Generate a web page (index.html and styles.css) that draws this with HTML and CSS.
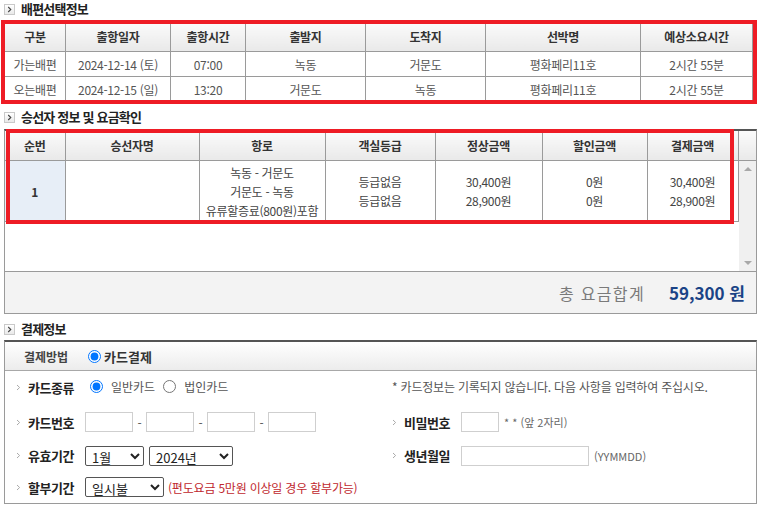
FILE: index.html
```html
<!DOCTYPE html>
<html lang="ko">
<head>
<meta charset="utf-8">
<title>배편선택정보</title>
<link rel="stylesheet" href="styles.css">
</head>
<body>
<div class="page">
  <h2 class="sec-title">
    <span class="sec-ico"><svg viewBox="0 0 11 11" width="11" height="11"><path d="M4.2 3 L6.8 5.5 L4.2 8" fill="none" stroke="#444" stroke-width="1.1"/></svg></span>
    배편선택정보
  </h2>
  <div class="sched-wrap">
    <table class="grid sched">
      <colgroup>
        <col style="width:61px"><col style="width:105px"><col style="width:75px"><col style="width:120px"><col style="width:120px"><col style="width:155px"><col style="width:112px">
      </colgroup>
      <thead>
        <tr><th>구분</th><th>출항일자</th><th>출항시간</th><th>출발지</th><th>도착지</th><th>선박명</th><th>예상소요시간</th></tr>
      </thead>
      <tbody>
        <tr><td>가는배편</td><td>2024-12-14 (토)</td><td>07:00</td><td>녹동</td><td>거문도</td><td>평화페리11호</td><td>2시간 55분</td></tr>
        <tr><td>오는배편</td><td>2024-12-15 (일)</td><td>13:20</td><td>거문도</td><td>녹동</td><td>평화페리11호</td><td>2시간 55분</td></tr>
      </tbody>
    </table>
    <div class="hl hl-sched"></div>
  </div>

  <h2 class="sec-title gap">
    <span class="sec-ico"><svg viewBox="0 0 11 11" width="11" height="11"><path d="M4.2 3 L6.8 5.5 L4.2 8" fill="none" stroke="#444" stroke-width="1.1"/></svg></span>
    승선자 정보 및 요금확인
  </h2>
  <div class="pax-box">
    <table class="grid pax-head">
      <colgroup>
        <col style="width:60px"><col style="width:134px"><col style="width:126px"><col style="width:110px"><col style="width:107px"><col style="width:105px"><col style="width:91px"><col style="width:18px">
      </colgroup>
      <thead>
        <tr><th>순번</th><th>승선자명</th><th>항로</th><th>객실등급</th><th>정상금액</th><th>할인금액</th><th>결제금액</th><th class="sb-head"></th></tr>
      </thead>
    </table>
    <div class="pax-scroll">
      <table class="grid pax-body">
        <colgroup>
          <col style="width:60px"><col style="width:134px"><col style="width:126px"><col style="width:110px"><col style="width:107px"><col style="width:105px"><col style="width:91px">
        </colgroup>
        <tbody>
          <tr>
            <td class="seq">1</td>
            <td></td>
            <td class="multi">녹동 - 거문도<br>거문도 - 녹동<br>유류할증료(800원)포함</td>
            <td class="multi">등급없음<br>등급없음</td>
            <td class="multi">30,400원<br>28,900원</td>
            <td class="multi">0원<br>0원</td>
            <td class="multi">30,400원<br>28,900원</td>
          </tr>
        </tbody>
      </table>
      <div class="vscroll">
        <span class="arr arr-up"></span>
        <span class="arr arr-down"></span>
      </div>
    </div>
    <div class="total">
      <span class="total-label">총 요금합계</span>
      <span class="total-val">59,300 원</span>
    </div>
    <div class="hl hl-pax"></div>
  </div>

  <h2 class="sec-title gap">
    <span class="sec-ico"><svg viewBox="0 0 11 11" width="11" height="11"><path d="M4.2 3 L6.8 5.5 L4.2 8" fill="none" stroke="#444" stroke-width="1.1"/></svg></span>
    결제정보
  </h2>
  <div class="pay-box">
    <div class="pay-head">
      <span class="pay-head-label">결제방법</span>
      <label class="radio-lbl strong"><input type="radio" name="method" checked>카드결제</label>
    </div>
    <div class="pay-grid">
      <div class="cell">
        <span class="row-arr"><svg viewBox="0 0 5 7" width="5" height="7"><path d="M1 1 L3.6 3.5 L1 6" fill="none" stroke="#aaa" stroke-width="1"/></svg></span>
        <span class="lbl">카드종류</span>
        <label class="radio-lbl opt"><input type="radio" name="ctype" checked>일반카드</label>
        <label class="radio-lbl opt"><input type="radio" name="ctype">법인카드</label>
      </div>
      <div class="cell right">
        <span class="note">* 카드정보는 기록되지 않습니다. 다음 사항을 입력하여 주십시오.</span>
      </div>

      <div class="cell">
        <span class="row-arr"><svg viewBox="0 0 5 7" width="5" height="7"><path d="M1 1 L3.6 3.5 L1 6" fill="none" stroke="#aaa" stroke-width="1"/></svg></span>
        <span class="lbl">카드번호</span>
        <input class="txt w48" type="text">
        <span class="dash">-</span>
        <input class="txt w48" type="text">
        <span class="dash">-</span>
        <input class="txt w48" type="text">
        <span class="dash">-</span>
        <input class="txt w48" type="text">
      </div>
      <div class="cell right">
        <span class="row-arr"><svg viewBox="0 0 5 7" width="5" height="7"><path d="M1 1 L3.6 3.5 L1 6" fill="none" stroke="#aaa" stroke-width="1"/></svg></span>
        <span class="lbl">비밀번호</span>
        <input class="txt w38" type="password">
        <span class="hint">* * (앞 2자리)</span>
      </div>

      <div class="cell">
        <span class="row-arr"><svg viewBox="0 0 5 7" width="5" height="7"><path d="M1 1 L3.6 3.5 L1 6" fill="none" stroke="#aaa" stroke-width="1"/></svg></span>
        <span class="lbl">유효기간</span>
        <select class="sel w59"><option>1월</option></select>
        <select class="sel w84 ml5"><option>2024년</option></select>
      </div>
      <div class="cell right">
        <span class="row-arr"><svg viewBox="0 0 5 7" width="5" height="7"><path d="M1 1 L3.6 3.5 L1 6" fill="none" stroke="#aaa" stroke-width="1"/></svg></span>
        <span class="lbl">생년월일</span>
        <input class="txt w128" type="text">
        <span class="hint">(YYMMDD)</span>
      </div>

      <div class="cell">
        <span class="row-arr"><svg viewBox="0 0 5 7" width="5" height="7"><path d="M1 1 L3.6 3.5 L1 6" fill="none" stroke="#aaa" stroke-width="1"/></svg></span>
        <span class="lbl">할부기간</span>
        <select class="sel w79"><option>일시불</option></select>
        <span class="warn">(편도요금 5만원 이상일 경우 할부가능)</span>
      </div>
      <div class="cell right"></div>
    </div>
  </div>
</div>
</body>
</html>
```
FILE: styles.css
```css
body {
  margin: 0;
  background: #fff;
  color: #333;
  font-family: "Noto Sans CJK KR", "Noto Sans", sans-serif;
}

.page {
  padding: 0 7px 0 4px;
  width: 753px;
}

/* section titles */
.sec-title {
  display: flex;
  align-items: center;
  gap: 6px;
  height: 18px;
  margin: 0;
  padding-bottom: 2px;
  font-size: 13px;
  line-height: 18px;
  font-weight: 700;
  letter-spacing: -0.8px;
  color: #222;
}
.sec-title.gap { margin-top: 6px; }
.sec-title + .pax-box { margin-top: 1px; }

.sec-ico {
  display: flex;
  width: 11px;
  height: 11px;
  box-sizing: border-box;
  border: 1px solid #c9c9c9;
  background: linear-gradient(#ffffff, #e9e9e9);
  align-items: center;
  justify-content: center;
}
.sec-ico svg { display: block; margin: -1px; }

/* generic grid table */
.grid {
  border-collapse: collapse;
  table-layout: fixed;
  font-size: 12px;
  color: #444;
}
.grid th {
  font-weight: 700;
  color: #333;
  background: linear-gradient(#fbfbfb, #e9e9e9);
  border: 1px solid #9a9a9a;
  border-top: 0;
  letter-spacing: -0.3px;
  padding: 0;
  text-align: center;
}
.grid td {
  border: 1px solid #9a9a9a;
  padding: 0;
  text-align: center;
  letter-spacing: -0.3px;
}

/* schedule table */
.sched-wrap {
  position: relative;
  width: 748px;
}
.sched {
  width: 748px;
  border-top: 2px solid #555;
}
.sched th { height: 29px; }
.sched td { height: 24px; color: #555; }

/* highlight frames */
.hl {
  position: absolute;
  box-sizing: border-box;
  border: 4px solid #ee1c25;
  pointer-events: none;
}
.hl-sched {
  left: -3px;
  top: 0;
  width: 756px;
  height: 84px;
}

/* passenger box */
.pax-box {
  position: relative;
  width: 751px;
  border: 1px solid #9a9a9a;
  border-top: 2px solid #555;
}
.pax-head { width: 751px; }
.pax-head th { height: 29px; }
.pax-head th:first-child { border-left: 0; }
.pax-head th:last-child { border-right: 0; }
.pax-head th.sb-head { border-left: 0; }

.pax-scroll {
  display: flex;
  height: 110px;
}
.pax-body {
  width: 733px;
  align-self: flex-start;
}
.pax-body td { height: 60px; border-top: 0; }
.pax-body td:first-child { border-left: 0; }
.pax-body td.seq {
  background: #e7eef7;
  font-weight: 700;
  color: #333;
}
.pax-body td.multi { line-height: 19px; }

.vscroll {
  position: relative;
  width: 18px;
  background: #f0f0f0;
}
.arr {
  position: absolute;
  left: 5px;
  width: 0;
  height: 0;
  border-left: 4px solid transparent;
  border-right: 4px solid transparent;
}
.arr-up { top: 6px; border-bottom: 4px solid #a8a8a8; }
.arr-down { bottom: 6px; border-top: 4px solid #a8a8a8; }

.total {
  display: flex;
  align-items: center;
  justify-content: flex-end;
  height: 41px;
  border-top: 1px solid #9a9a9a;
  background: #f3f3f3;
  padding-right: 11px;
}
.total-label {
  font-size: 16px;
  color: #7a7a7a;
  letter-spacing: 1.3px;
  margin-right: 24px;
}
.total-val {
  font-size: 17px;
  font-weight: 700;
  color: #1a4386;
}
.hl-pax {
  left: 1px;
  top: -2px;
  width: 728px;
  height: 95px;
}

/* payment box */
.pay-box {
  width: 751px;
  border: 1px solid #9a9a9a;
  border-top: 2px solid #555;
}
.pay-head {
  display: flex;
  align-items: center;
  height: 28px;
  padding-left: 19px;
  background: linear-gradient(#ffffff, #ececec);
  border-bottom: 1px solid #a8a8a8;
}
.pay-head-label {
  font-size: 12px;
  font-weight: 700;
  color: #444;
  width: 64px;
}
.radio-lbl {
  display: flex;
  align-items: center;
  font-size: 12px;
}
.radio-lbl input {
  margin: 0 3px 0 0;
  width: 13px;
  height: 13px;
}
.radio-lbl.strong {
  font-weight: 700;
  font-size: 13px;
  color: #333;
}
.radio-lbl.opt {
  color: #555;
  margin-right: 8px;
  margin-top: -3px;
}
.radio-lbl.opt input { margin-right: 8px; }

.pay-grid {
  display: grid;
  grid-template-columns: 384px 1fr;
  grid-template-rows: 33px 36px 31px 32px;
}
.cell {
  display: flex;
  align-items: center;
  padding-left: 11px;
}
.cell.right { padding-left: 3px; }
.row-arr {
  display: flex;
  width: 12px;
  align-items: center;
}
.row-arr svg { display: block; }
.lbl {
  width: 57px;
  font-size: 13px;
  font-weight: 700;
  color: #222;
  letter-spacing: -0.5px;
}
.note {
  font-size: 12px;
  color: #555;
  letter-spacing: -0.2px;
  margin-top: -3px;
}
.txt {
  box-sizing: border-box;
  height: 20px;
  border: 1px solid #cfcfcf;
  padding: 0 2px;
  margin: 0;
  font-size: 12px;
}
.w48 { width: 48px; }
.w38 { width: 38px; }
.w128 { width: 128px; }
.dash {
  width: 13px;
  text-align: center;
  font-size: 12px;
  color: #555;
}
.hint {
  font-size: 11px;
  color: #666;
  margin-left: 5px;
}
.sel {
  box-sizing: border-box;
  height: 20px;
  margin: 0;
  padding: 0 0 0 2px;
  font-family: "Noto Sans CJK KR", "Noto Sans", sans-serif;
  font-size: 13px;
  color: #222;
  border: 1px solid #555;
  border-radius: 2px;
  background: #fff;
}
.w59 { width: 59px; }
.w84 { width: 84px; }
.w79 { width: 79px; }
.ml5 { margin-left: 5px; }
.warn {
  margin-left: 4px;
  font-size: 12px;
  color: #c0272d;
  letter-spacing: -0.2px;
}
.radio-lbl.opt:first-of-type { margin-left: 5px; }
```
